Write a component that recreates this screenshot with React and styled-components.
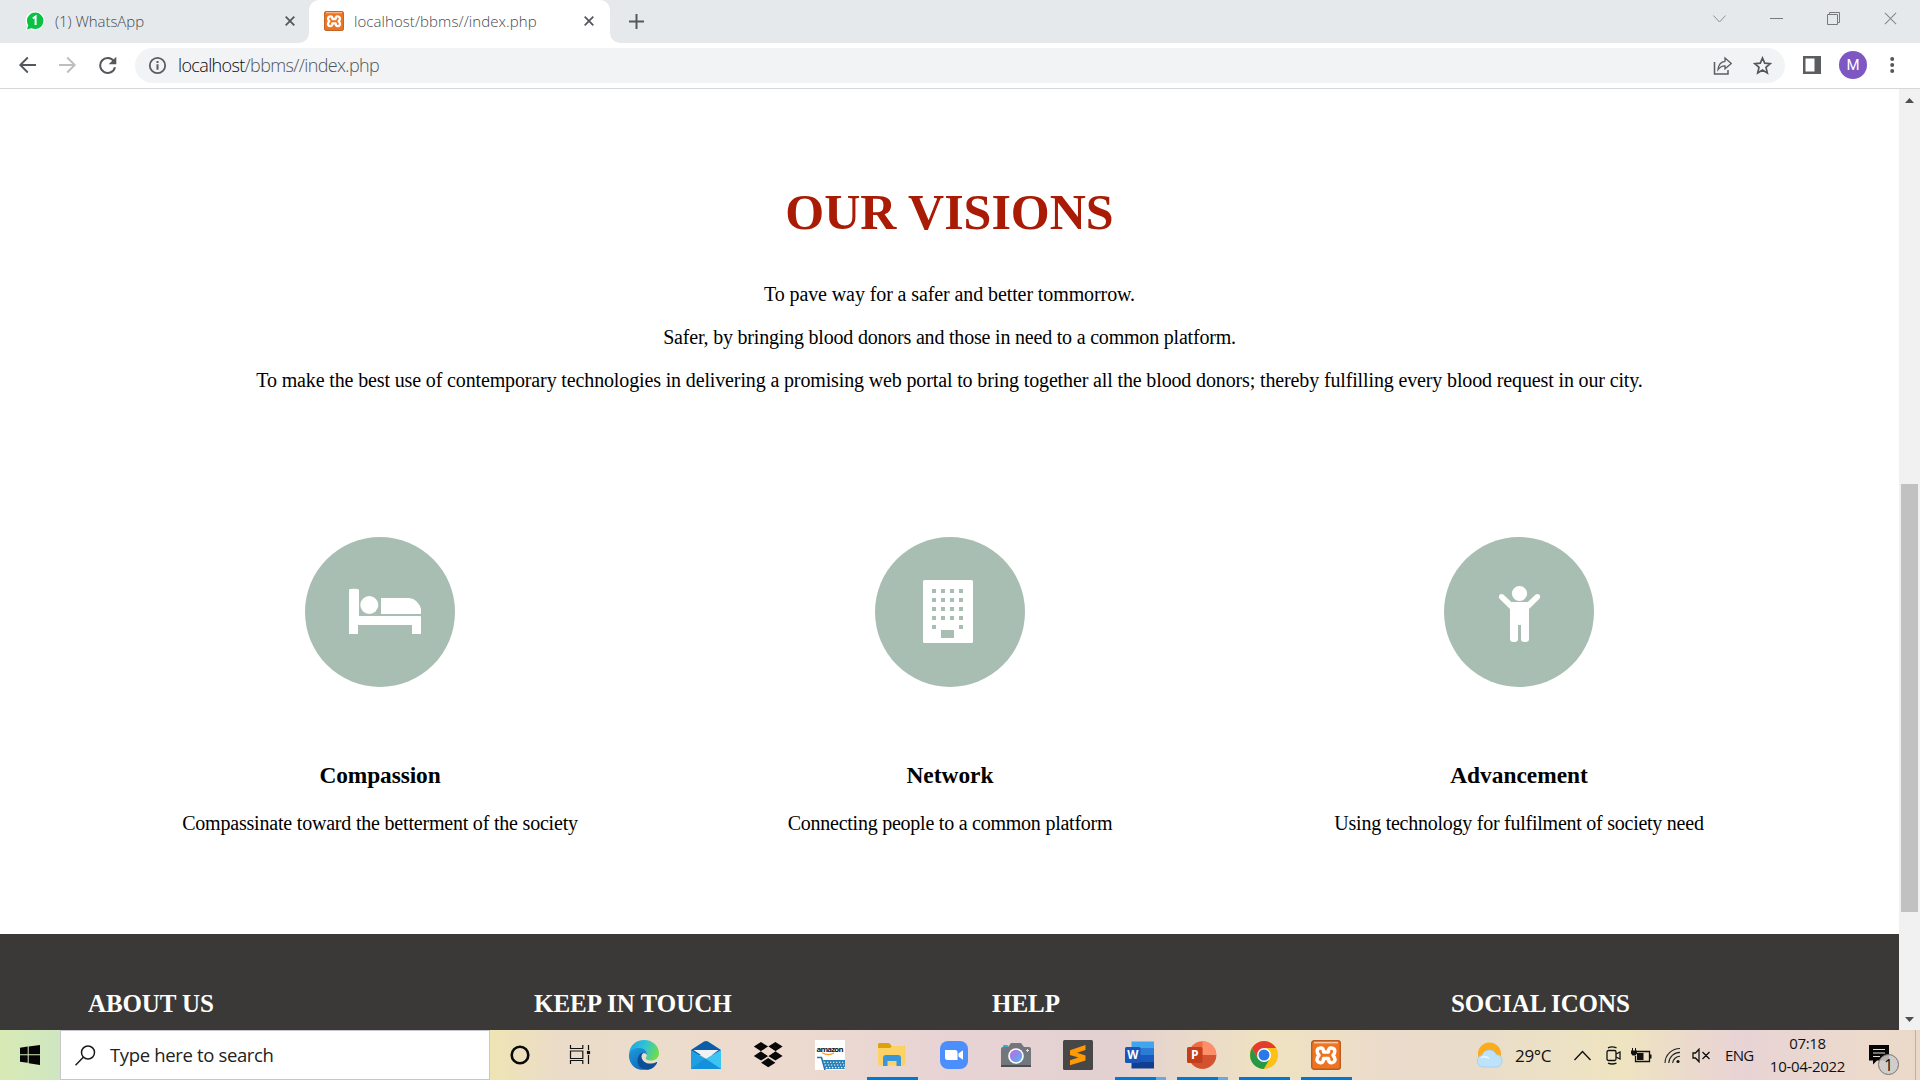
import React from "react";
import styled, { createGlobalStyle } from "styled-components";

const serif = `"Liberation Serif", "Times New Roman", serif`;
const ui = `"Open Sans", "Noto Sans", sans-serif`;

const GlobalStyle = createGlobalStyle`
  * { box-sizing: border-box; }
  html, body { margin: 0; padding: 0; overflow: hidden; }
  svg { display: block; flex: none; }
`;

const Screen = styled.div`
  width: 1920px;
  height: 1080px;
  display: flex;
  flex-direction: column;
  background: #fff;
  overflow: hidden;
`;

/* ---------- browser chrome ---------- */
const TabStrip = styled.div`
  height: 43px;
  flex: none;
  display: flex;
  background: linear-gradient(90deg, #fff 0 700px, #e6e9ec 700px);
  font-family: ${ui};
`;
const Tab = styled.div`
  width: ${(p) => p.$width}px;
  height: 43px;
  display: flex;
  align-items: center;
  padding: 0 ${(p) => p.$right}px 1px ${(p) => p.$left}px;
  background: #fff;
  border-radius: 10px 10px 0 0;
`;
const IdleTab = styled(Tab)`
  background: #e6e9ec;
  border-radius: 0 0 10px 0;
`;
const ActiveTabBacking = styled.div`
  background: linear-gradient(#e6e9ec 12px, #fff 12px);
`;
const TabGap = styled.div`
  flex: 1;
  display: flex;
  align-items: center;
  padding: 0 23px 6px 19px;
  background: #e6e9ec;
  border-bottom-left-radius: 10px;
`;
const NewTab = styled.div`
  padding-top: 5px;
`;
const TabTitle = styled.span`
  flex: 1;
  margin-left: ${(p) => p.$gap}px;
  font-size: 15px;
  font-weight: 300;
  letter-spacing: ${(p) => p.$spacing}px;
  color: #45494e;
  white-space: nowrap;
`;
const WindowControls = styled.div`
  margin-left: auto;
  display: flex;
  align-items: center;
  gap: 44px;
`;
const Toolbar = styled.div`
  height: 46px;
  flex: none;
  display: flex;
  align-items: center;
  padding: 0 0 1px 18px;
  border-bottom: 1px solid #d5d7da;
  background: #fff;
`;
const NavButtons = styled.div`
  display: flex;
  align-items: center;
  gap: 21px;
  width: 117px;
`;
const Omnibox = styled.div`
  width: 1650px;
  height: 35px;
  display: flex;
  align-items: center;
  padding: 0 13px;
  border-radius: 18px;
  background: #f1f3f4;
`;
const Url = styled.span`
  flex: 1;
  margin-left: 11px;
  font-family: ${ui};
  font-size: 18px;
  font-weight: 300;
  letter-spacing: -0.64px;
  color: #505459;
`;
const Host = styled.span`
  color: #08090a;
`;
const OmniActions = styled.div`
  display: flex;
  gap: 21px;
`;
const ToolbarActions = styled.div`
  flex: 1;
  display: flex;
  align-items: center;
  padding-left: 18px;
`;
const Avatar = styled.div`
  width: 28px;
  height: 28px;
  margin: 0 23px 0 18px;
  border-radius: 50%;
  display: grid;
  place-items: center;
  background: #7e57c2;
  color: #fff;
  font: 400 15px/1 Roboto, sans-serif;
`;

/* ---------- web page ---------- */
const Viewport = styled.div`
  height: 941px;
  flex: none;
  display: flex;
`;
const Page = styled.main`
  width: 1899px;
  display: flex;
  flex-direction: column;
  font-family: ${serif};
  color: #000;
`;
const Visions = styled.section`
  height: 845px;
  flex: none;
  padding-top: 95px;
  text-align: center;
`;
const Title = styled.h1`
  margin: 0 0 43px;
  font-size: 50px;
  line-height: 56px;
  color: #a91b05;
`;
const Line = styled.p`
  margin: 0 0 20px;
  font-size: 20px;
  line-height: 23px;
  letter-spacing: ${(p) => p.$spacing}px;
  white-space: nowrap;
`;
const Values = styled.div`
  display: grid;
  grid-template-columns: 570px 570px 568px;
  padding: 125px 95px 0;
`;
const Value = styled.article`
  display: flex;
  flex-direction: column;
  align-items: center;
`;
const Disc = styled.div`
  width: 150px;
  height: 150px;
  border-radius: 50%;
  background: #a9beb2;
`;
const ValueName = styled.h3`
  margin: 75px 0 23px;
  font-size: 23.4px;
  line-height: 27px;
  letter-spacing: ${(p) => p.$spacing}px;
`;
const Footer = styled.footer`
  flex: 1;
  display: grid;
  grid-template-columns: 446px 458px 459px 1fr;
  align-items: start;
  padding: 56px 0 0 88px;
  background: #3b3937;
`;
const FooterHeading = styled.h2`
  margin: 0;
  font-size: 25px;
  line-height: 27px;
  letter-spacing: ${(p) => p.$spacing}px;
  color: #fff;
`;
const Scrollbar = styled.div`
  width: 21px;
  display: flex;
  flex-direction: column;
  align-items: center;
  padding: 9px 0 8px;
  background: #f1f1f1;
`;
const ScrollThumb = styled.div`
  width: 17px;
  height: 428px;
  margin: 381px 0 auto;
  background: #c1c1c1;
`;

/* ---------- taskbar ---------- */
const Taskbar = styled.div`
  height: 50px;
  flex: none;
  display: flex;
  font-family: ${ui};
  color: #111;
  background: linear-gradient(
    90deg,
    #d8eab4 0,
    #cfe6c2 60px,
    #efe4b4 490px,
    #ebdcc9 560px,
    #ecdccd 680px,
    #ecdacf 800px,
    #e8d4d4 930px,
    #e3d0d1 1110px,
    #efe2c1 1270px,
    #ebdbcc 1400px,
    #e9ddca 1480px,
    #efe4c0 1620px,
    #e8d3d5 1740px,
    #ecdacc 1870px,
    #ead9c9 1920px
  );
`;
const StartButton = styled.div`
  width: 60px;
  padding: 15px 0 0 20px;
`;
const SearchBox = styled.div`
  width: 430px;
  height: 50px;
  display: flex;
  align-items: center;
  padding-left: 14px;
  border: 1px solid #c6c6cc;
  background: #fff;
`;
const SearchHint = styled.span`
  margin-left: 14px;
  padding-bottom: 2px;
  font-size: 18.5px;
  letter-spacing: -0.35px;
  color: #222;
`;
const Apps = styled.div`
  display: flex;
  margin-left: -1px;
`;
const AppSlot = styled.div`
  width: 62px;
  height: 50px;
  display: flex;
  flex-direction: column;
  justify-content: space-between;
  padding: 10px 5px 0 6px;
`;
const AppIcon = styled.div`
  padding-left: 10px;
`;
const Running = styled.div`
  height: 3px;
  background: ${(p) =>
    p.$stacked ? "linear-gradient(90deg, #0078d7 41px, #62abe6 41px)" : "#0078d7"};
`;
const Tray = styled.div`
  flex: 1;
  display: flex;
  align-items: center;
  padding-left: 119px;
`;
const TrayItem = styled.div`
  margin-left: ${(p) => p.$gap || 0}px;
`;
const TrayText = styled.div`
  width: ${(p) => p.$width}px;
  margin-left: ${(p) => p.$gap}px;
  font-size: ${(p) => p.$size || 15}px;
  letter-spacing: ${(p) => p.$spacing || 0}px;
  white-space: nowrap;
`;
const Clock = styled.div`
  width: 77px;
  margin-left: 15px;
  text-align: center;
  font-size: 15px;
  line-height: 23px;
  letter-spacing: -0.3px;
  white-space: nowrap;
`;
const Notifications = styled.div`
  position: relative;
  margin-left: 23px;
  width: 30px;
  height: 34px;
  padding-top: 7px;
`;
const Badge = styled.div`
  position: absolute;
  left: 9px;
  top: 16px;
  width: 21px;
  height: 21px;
  border: 1px solid #77736f;
  border-radius: 50%;
  display: grid;
  place-items: center;
  background: rgba(205, 203, 202, 0.88);
  font-size: 16px;
  line-height: 1;
`;
const ShowDesktop = styled.div`
  width: 5px;
  height: 50px;
  margin-left: auto;
  border-left: 1px solid #bfb1a6;
`;

/* ---------- drawings ---------- */
const CloseX = ({ size = 10, color = "#54585d", width = 1.8 }) => (
  <svg width={size} height={size} viewBox="0 0 10 10">
    <path d="M.7.7l8.6 8.6M9.3.7L.7 9.3" stroke={color} strokeWidth={width} />
  </svg>
);

const XamppLogo = ({ size }) => (
  <svg width={size} height={size} viewBox="0 0 30 30">
    <rect x=".7" y=".7" width="28.6" height="28.6" rx="2.5" fill="#ef7421" stroke="#b95c20" strokeWidth="1.4" />
    <path d="M3 2.6h24" stroke="#f9c79f" strokeWidth="1.6" />
    <path
      d="M10 8C6 8 5.600 11 6.600 13.200L8 15.300 6.500 17.500C5 20.500 7 23 9.800 22.700 12.300 22.500 12.600 20 12.600 18.500H17.400C17.400 20 17.700 22.500 20.200 22.700 23 23 25 20.500 23.500 17.500L22 15.300 23.400 13.200C24.400 11 24 8 20 8 17.500 8 17.400 10 17.400 12H12.600C12.600 10 12.500 8 10 8Z"
      fill="none"
      stroke="#fff"
      strokeWidth="3.500"
      strokeLinejoin="round"
    />
  </svg>
);

const WhatsAppBadge = () => (
  <svg width="20" height="20" viewBox="0 0 20 20">
    <circle cx="10" cy="9.800" r="9.500" fill="#fff" />
    <path d="M1 19.500l1.500-6 4 4z" fill="#fff" />
    <circle cx="10.200" cy="9.800" r="8.300" fill="#0bc144" />
    <path d="M2 18.400l1.400-5 3.400 3.700z" fill="#0bc144" />
    <path d="M7.800 7.300l2.800-1.700v8.400" fill="none" stroke="#fff" strokeWidth="2" />
  </svg>
);

const BedIcon = () => (
  <svg width="150" height="150" viewBox="0 0 150 150" fill="#fff">
    <path d="M45 52q4-.6 7.500 0 1.500.2 1.500 1.500V79h61q1 0 1 1v17h-9v-9H53v9h-9V53.500Q44 52 45 52z" />
    <circle cx="64.300" cy="68" r="9" />
    <path d="M76 61h28q9 1 12 11v5H76z" />
  </svg>
);

const BuildingIcon = () => (
  <svg width="150" height="150" viewBox="0 0 150 150">
    <rect x="48" y="43" width="50" height="63" rx="1.500" fill="#fff" />
    <g fill="#a9beb2">
      {[52, 61, 70, 79, 88].map((y, row) =>
        [57, 66, 75, 84].map((x, col) =>
          row === 4 && (col === 1 || col === 2) ? null : (
            <rect key={`${x}-${y}`} x={x} y={y} width="4" height="4" />
          )
        )
      )}
      <rect x="66" y="93" width="13" height="8" />
    </g>
  </svg>
);

const ChildIcon = () => (
  <svg width="150" height="150" viewBox="0 0 150 150" fill="#fff">
    <circle cx="75.500" cy="56.500" r="7.600" />
    <path d="M55.600 57.800q2-1.600 4 0l7.600 7.200h16.600l7.600-7.200q2.200-1.600 4 0 1.600 2 0 4L85 72v30q0 3-3.500 3h-1Q77 105 77 102V88h-3v14q0 3-3.500 3h-1Q66 105 66 102V72L55.600 61.800q-1.600-2 0-4z" />
  </svg>
);

const icons = {
  cortana: (
    <svg width="30" height="30" viewBox="0 0 30 30">
      <circle cx="15" cy="15" r="8.300" fill="none" stroke="#0a0a0a" strokeWidth="2.600" />
    </svg>
  ),
  taskView: (
    <svg width="30" height="30" viewBox="0 0 30 30" fill="none" stroke="#111" strokeWidth="1.200">
      <path d="M3.500 5v3.500h12.300V5M3.500 24v-3.500h12.300V24M3.500 11h12.300v7.500H3.500zM21.500 5v5M21.500 15v9" />
      <rect x="20.500" y="11.500" width="2" height="2" fill="#111" />
    </svg>
  ),
  edge: (
    <svg width="30" height="30" viewBox="0 0 30 30">
      <defs>
        <linearGradient id="edgeTop" x1="0" x2="1" y1=".2" y2=".5">
          <stop offset="0" stopColor="#1fa5dc" />
          <stop offset=".5" stopColor="#2fc2d8" />
          <stop offset="1" stopColor="#6ddc4e" />
        </linearGradient>
        <linearGradient id="edgeSide" x1="0" x2=".6" y1="0" y2="1">
          <stop offset="0" stopColor="#1b9de0" />
          <stop offset="1" stopColor="#1268b8" />
        </linearGradient>
      </defs>
      <path d="M0 14C1 5 7 0 15 0c9 0 15 6.500 15 13 0 5-4 7.500-8 7.500-4 0-6-1.500-5-3 2.500-4 .5-8-5-8.500C7 8.500 3 10 0 14z" fill="url(#edgeTop)" />
      <path d="M0 14c2-4.500 6.500-6.500 10.500-6 5 .5 8 3.500 7.500 7-1-2-4-2.500-5.500 0-3 5 1 12.500 8 13.500C10 33-1 26 0 14z" fill="url(#edgeSide)" />
      <path d="M10 15.500c-4 6 0 14 8 14.300 4 0 8-2.800 10-6.800.4-.8-.2-1.300-1-.8-7 3.500-14 0-14.500-5.500 0-2 .5-3 1.500-4-1.500 0-3 1-4 2.800z" fill="#0c4f96" />
    </svg>
  ),
  mail: (
    <svg width="30" height="30" viewBox="0 0 30 30">
      <path d="M0 10L13 1.500q2-1 4 0L30 10v5H0z" fill="#0c5ca8" />
      <path d="M2.500 10h25L16 19z" fill="#f2f2f2" />
      <path d="M0 10l15 9 15-9v19H0z" fill="#1f9fe4" />
      <path d="M15 19l15-9v19z" fill="#3cc4f2" />
      <path d="M0 29l14-10.500L30 29z" fill="#1591dc" />
    </svg>
  ),
  dropbox: (
    <svg width="30" height="30" viewBox="0 0 30 30" fill="#080808">
      <path d="M8 2l7.200 4.600L8 11.300.8 6.600zM22.400 2l7.200 4.600-7.200 4.700-7.200-4.700zM8 11.300l7.200 4.600L8 20.600.8 15.900zM22.400 11.300l7.200 4.600-7.200 4.700-7.200-4.700zM15.200 18l7.200 4.700-7.200 4.600L8 22.700z" />
      <path d="M8 11.300l7.200-4.700 7.200 4.700-7.200 4.600z" fill="#ecdacf" />
    </svg>
  ),
  amazon: (
    <svg width="30" height="30" viewBox="0 0 30 30">
      <path d="M0 0h30v30H0z" fill="#fff" />
      <text x="1.500" y="11.500" fontFamily="Open Sans" fontWeight="700" fontSize="7.800" textLength="27" fill="#141414">amazon</text>
      <path d="M7 12.700q6 3.600 12 .4" fill="none" stroke="#f79c34" strokeWidth="1.100" />
      <path d="M2 17.500h4.500L10 30" fill="none" stroke="#2378b4" strokeWidth="1.600" />
      <path d="M8 20h22v9H10.500z" fill="#2980b9" />
      <path d="M9 22.300h21M10 25h20M11 27.600h19" stroke="#fff" strokeWidth="1.100" strokeDasharray="1.300 1.700" />
    </svg>
  ),
  explorer: (
    <svg width="30" height="30" viewBox="0 0 30 30">
      <path d="M1 4.500Q1 3 2.500 3h9q1.500 0 2 1.500l1 1.500H28v10H1z" fill="#dfa010" />
      <path d="M1 8h12l2-2h11.500q2 0 2 2v15.500q0 2-2 2H3q-2 0-2-2z" fill="#fdd264" />
      <path d="M6 26V18q0-3 3-3h12q3 0 3 3v8h-4.500v-5h-9v5z" fill="#3a96dc" />
    </svg>
  ),
  zoom: (
    <svg width="30" height="30" viewBox="0 0 30 30">
      <rect x="1" y="1" width="28" height="28" rx="8" fill="#4a8ffc" />
      <path d="M6 10h10q2.500 0 2.500 2.500V20H8.500Q6 20 6 17.500zM19.500 13.500l4-3q.5-.3.500.5v8q0 .8-.5.500l-4-3z" fill="#fff" />
    </svg>
  ),
  camera: (
    <svg width="30" height="30" viewBox="0 0 30 30">
      <defs>
        <linearGradient id="lens" x1="0" x2="1" y1="0" y2="1">
          <stop offset="0" stopColor="#c56be0" />
          <stop offset=".5" stopColor="#8b8cea" />
          <stop offset="1" stopColor="#3cc8ee" />
        </linearGradient>
      </defs>
      <path d="M2 8V6q0-1 1-1h3q1 0 1 1v2z" fill="#36a8e0" />
      <path d="M0 9q0-2 2-2h5l3-4h10l3 4h5q2 0 2 2v17.500H0z" fill="#72777b" />
      <path d="M0 25h30v2H0z" fill="#4c5053" />
      <circle cx="15" cy="16" r="7.800" fill="#fff" />
      <circle cx="15" cy="16" r="6.200" fill="url(#lens)" />
      <path d="M26.500 9v3M25 10.500h3" stroke="#ddd" />
    </svg>
  ),
  sublime: (
    <svg width="30" height="30" viewBox="0 0 30 30">
      <rect width="30" height="30" rx="1.500" fill="#474747" />
      <path d="M7 10.200L22.500 5v5L14 12.800l8.500 2.600v5L7 25.200v-5l8.500-2.700L7 15z" fill="#ff9a05" />
    </svg>
  ),
  word: (
    <svg width="30" height="30" viewBox="0 0 30 30">
      <path d="M6.500 1.500H29V8H6.500z" fill="#41a5ee" />
      <path d="M6.500 8H29v7H6.500z" fill="#2b7cd3" />
      <path d="M6.500 15H29v7H6.500z" fill="#185abd" />
      <path d="M6.500 22H29v6.500H6.500z" fill="#103f91" />
      <rect y="7" width="15.500" height="16" rx="1.500" fill="#1a55b8" />
      <text x="7.700" y="18.800" textAnchor="middle" fontFamily="Open Sans" fontWeight="700" fontSize="11.500" fill="#fff">W</text>
    </svg>
  ),
  powerpoint: (
    <svg width="30" height="30" viewBox="0 0 30 30">
      <circle cx="15.500" cy="15" r="13.800" fill="#ed6c47" />
      <path d="M15.500 1.200A13.800 13.800 0 0 1 29.300 15H15.500z" fill="#ff8f6b" />
      <path d="M1.700 15h27.600a13.800 13.800 0 0 1-27.600 0z" fill="#d35230" />
      <rect y="7" width="15.500" height="16" rx="1.500" fill="#c43e1c" />
      <text x="7.700" y="19" textAnchor="middle" fontFamily="Open Sans" fontWeight="700" fontSize="12" fill="#fff">P</text>
    </svg>
  ),
  chrome: (
    <svg width="30" height="30" viewBox="0 0 30 30">
      <circle cx="15" cy="15" r="14" fill="#fbc117" />
      <path d="M2.900 8A14 14 0 0 1 27.100 8H15L8.900 18.500z" fill="#e33b2e" />
      <path d="M2.900 8l6 10.500L15 22l5-2-5.200 9A14 14 0 0 1 2.900 8z" fill="#279847" />
      <circle cx="15" cy="15" r="7" fill="#fff" />
      <circle cx="15" cy="15" r="5.500" fill="#2a78ea" />
    </svg>
  ),
  xampp: <XamppLogo size={30} />,
};

const apps = [
  { icon: "cortana" },
  { icon: "taskView" },
  { icon: "edge" },
  { icon: "mail" },
  { icon: "dropbox" },
  { icon: "amazon" },
  { icon: "explorer", running: true },
  { icon: "zoom" },
  { icon: "camera" },
  { icon: "sublime" },
  { icon: "word", running: true, stacked: true },
  { icon: "powerpoint", running: true, stacked: true },
  { icon: "chrome", running: true },
  { icon: "xampp", running: true },
];

const visions = [
  { text: "To pave way for a safer and better tommorrow.", spacing: -0.1 },
  { text: "Safer, by bringing blood donors and those in need to a common platform.", spacing: -0.2 },
  {
    text: "To make the best use of contemporary technologies in delivering a promising web portal to bring together all the blood donors; thereby fulfilling every blood request in our city.",
    spacing: -0.137,
  },
];

const values = [
  {
    Icon: BedIcon,
    name: "Compassion",
    nameSpacing: -0.1,
    text: "Compassinate toward the betterment of the society",
    spacing: -0.2,
  },
  {
    Icon: BuildingIcon,
    name: "Network",
    nameSpacing: 0,
    text: "Connecting people to a common platform",
    spacing: -0.24,
  },
  {
    Icon: ChildIcon,
    name: "Advancement",
    nameSpacing: 0,
    text: "Using technology for fulfilment of society need",
    spacing: -0.25,
  },
];

const footerHeadings = [
  { text: "ABOUT US", spacing: -0.1 },
  { text: "KEEP IN TOUCH", spacing: 0 },
  { text: "HELP", spacing: 0 },
  { text: "SOCIAL ICONS", spacing: -0.1 },
];

const BrowserChrome = () => (
  <>
    <TabStrip>
      <IdleTab $width={309} $left={25} $right={14}>
        <WhatsAppBadge />
        <TabTitle $gap={10} $spacing={-0.05}>(1) WhatsApp</TabTitle>
        <CloseX />
      </IdleTab>
      <ActiveTabBacking>
        <Tab $width={301} $left={15} $right={16}>
          <XamppLogo size={20} />
          <TabTitle $gap={10} $spacing={0.07}>localhost/bbms//index.php</TabTitle>
          <CloseX />
        </Tab>
      </ActiveTabBacking>
      <TabGap>
        <NewTab>
          <svg width="15" height="15" viewBox="0 0 15 15">
            <path d="M7.500 0v15M0 7.500h15" stroke="#54585d" strokeWidth="2" />
          </svg>
        </NewTab>
        <WindowControls>
          <svg width="13" height="8" viewBox="0 0 13 8" fill="none" stroke="#8b8e91">
            <path d="M.4.500l6.100 6.500L12.600.5" />
          </svg>
          <svg width="13" height="13" viewBox="0 0 13 13">
            <path d="M0 6.500h13" stroke="#77797c" />
          </svg>
          <svg width="13" height="13" viewBox="0 0 13 13" fill="none" stroke="#77797c">
            <path d="M.5 2.500h10v10H.5zM2.500 2.500V.500h10v10h-2" />
          </svg>
          <CloseX size={13} color="#85888b" width={0.8} />
        </WindowControls>
      </TabGap>
    </TabStrip>
    <Toolbar>
      <NavButtons>
        <svg width="19" height="18" viewBox="0 0 19 18" fill="none" stroke="#54585d" strokeWidth="1.900">
          <path d="M18 9H2.500M9.800 1.500L2.300 9l7.500 7.500" />
        </svg>
        <svg width="19" height="18" viewBox="0 0 19 18" fill="none" stroke="#bcbec1" strokeWidth="1.900">
          <path d="M1 9h15.500M9.200 1.500L16.700 9l-7.500 7.500" />
        </svg>
        <svg width="19" height="18" viewBox="0 0 19 18">
          <path d="M15.800 5A7.500 7.500 0 1 0 17 11.200" fill="none" stroke="#54585d" strokeWidth="2" />
          <path d="M18.300.8v7.400h-7.600z" fill="#54585d" />
        </svg>
      </NavButtons>
      <Omnibox>
        <svg width="19" height="19" viewBox="0 0 19 19">
          <circle cx="9.500" cy="9.500" r="7.700" fill="none" stroke="#5a5e63" strokeWidth="1.800" />
          <path d="M9.500 8.300v5.500M9.500 5v2" stroke="#5a5e63" strokeWidth="2" />
        </svg>
        <Url>
          <Host>localhost</Host>/bbms//index.php
        </Url>
        <OmniActions>
          <svg width="19" height="19" viewBox="0 0 19 19" fill="none" stroke="#5a5e63" strokeWidth="1.500">
            <path d="M1.500 6v12H15v-4" />
            <path d="M12 2l6.300 5.500-6.300 5.300V9.800C9 9.800 7 10.800 5 13.500 5.500 9 8 5.800 12 5.300z" strokeWidth="1.300" />
          </svg>
          <svg width="19" height="19" viewBox="0 0 19 19" fill="none" stroke="#54585d" strokeWidth="1.700">
            <path d="M9.500 2l2.200 5.200 5.600.5-4.300 3.700 1.300 5.500-4.800-2.900-4.800 2.900L6 11.400 1.700 7.700l5.600-.5z" />
          </svg>
        </OmniActions>
      </Omnibox>
      <ToolbarActions>
        <svg width="18" height="18" viewBox="0 0 18 18">
          <path d="M0 0h18v18H0z" fill="#5a5e63" />
          <path d="M2.500 2.500h9v13h-9z" fill="#fff" />
        </svg>
        <Avatar>M</Avatar>
        <svg width="5" height="18" viewBox="0 0 5 18" fill="#54585d">
          <circle cx="2.200" cy="3" r="2" />
          <circle cx="2.200" cy="9" r="2" />
          <circle cx="2.200" cy="15" r="2" />
        </svg>
      </ToolbarActions>
    </Toolbar>
  </>
);

const WindowsTaskbar = () => (
  <Taskbar>
    <StartButton>
      <svg width="20" height="20" viewBox="0 0 20 20" fill="#050505">
        <path d="M0 2.700l7.700-1.100v7.600H0zM8.700 1.400L20 0v9.200H8.700zM0 10.200h7.700v7.600L0 16.800zM8.700 10.200H20V20L8.700 18.200z" />
      </svg>
    </StartButton>
    <SearchBox>
      <svg width="21" height="21" viewBox="0 0 21 21" fill="none" stroke="#1a1a1a" strokeWidth="1.500">
        <circle cx="13" cy="7.500" r="6.500" />
        <path d="M8.300 12.300L.5 20.200" />
      </svg>
      <SearchHint>Type here to search</SearchHint>
    </SearchBox>
    <Apps>
      {apps.map((app) => (
        <AppSlot key={app.icon}>
          <AppIcon>{icons[app.icon]}</AppIcon>
          {app.running && <Running $stacked={app.stacked} />}
        </AppSlot>
      ))}
    </Apps>
    <Tray>
      <TrayItem>
        <svg width="28" height="26" viewBox="0 0 28 26">
          <circle cx="13.500" cy="12" r="11.500" fill="#fbab1c" />
          <path d="M6.800 25A6 6 0 0 1 6 13.200a7.600 7.600 0 0 1 14.200-.6A6.300 6.300 0 0 1 21.200 25z" fill="#bfe2fb" stroke="#9fcdf0" strokeWidth=".8" />
          <path d="M5 16q4-3 8 .5" fill="none" stroke="#e9f6ff" strokeWidth="1.500" />
        </svg>
      </TrayItem>
      <TrayText $gap={11} $width={59} $size={17} $spacing={-0.3}>29°C</TrayText>
      <TrayItem>
        <svg width="18" height="11" viewBox="0 0 18 11" fill="none" stroke="#111" strokeWidth="1.400">
          <path d="M.5 10l8-8.500 8 8.500" />
        </svg>
      </TrayItem>
      <TrayItem $gap={14}>
        <svg width="15" height="19" viewBox="0 0 15 19" fill="none" stroke="#111" strokeWidth="1.300">
          <rect x="1" y="4.500" width="9" height="10" rx="1.500" />
          <path d="M10 8l4-2v7l-4-2M2 1.800Q6 0 10.500 1.800M2 17.200q4 1.600 8.500 0" />
        </svg>
      </TrayItem>
      <TrayItem $gap={10}>
        <svg width="21" height="15" viewBox="0 0 21 15">
          <path d="M4.500 3.500H18.500v10H4.500V8" fill="none" stroke="#111" strokeWidth="1.300" />
          <path d="M19 6.500h1.500v4H19zM6 5h6.500v7H6zM0 2.500h6v3L4.500 7.500h-3L0 5.500zM1 0h1v3H1zM4 0h1v3H4z" fill="#111" />
        </svg>
      </TrayItem>
      <TrayItem $gap={12}>
        <svg width="17" height="17" viewBox="0 0 17 17" fill="none" stroke="#222" strokeWidth="1.100">
          <path d="M1 16A15 15 0 0 1 16 1.500M4.800 16A11.200 11.200 0 0 1 16 5.400M8.600 16A7.500 7.500 0 0 1 16 9.300" />
          <circle cx="14" cy="14.500" r="1.600" fill="#111" stroke="none" />
        </svg>
      </TrayItem>
      <TrayItem $gap={11}>
        <svg width="19" height="15" viewBox="0 0 19 15" fill="none" stroke="#111" strokeWidth="1.300">
          <path d="M1 5h2.500L7 1.200v12.600L3.500 10H1zM10.500 4l7 7M17.500 4l-7 7" />
        </svg>
      </TrayItem>
      <TrayText $gap={14} $width={29} $size={15} $spacing={-0.7}>ENG</TrayText>
      <Clock>
        07:18
        <br />
        10-04-2022
      </Clock>
      <Notifications>
        <svg width="21" height="20" viewBox="0 0 21 20">
          <path d="M0 0h20v15.500H8L4 19.500v-4H0z" fill="#050505" />
          <path d="M4 4.500h12M4 8h12M4 11.500h7" stroke="#e9dace" strokeWidth="1.200" />
        </svg>
        <Badge>1</Badge>
      </Notifications>
      <ShowDesktop />
    </Tray>
  </Taskbar>
);

export default function App() {
  return (
    <Screen>
      <GlobalStyle />
      <BrowserChrome />
      <Viewport>
        <Page>
          <Visions>
            <Title>OUR VISIONS</Title>
            {visions.map((line) => (
              <Line key={line.text} $spacing={line.spacing}>{line.text}</Line>
            ))}
            <Values>
              {values.map(({ Icon, name, nameSpacing, text, spacing }) => (
                <Value key={name}>
                  <Disc>
                    <Icon />
                  </Disc>
                  <ValueName $spacing={nameSpacing}>{name}</ValueName>
                  <Line $spacing={spacing}>{text}</Line>
                </Value>
              ))}
            </Values>
          </Visions>
          <Footer>
            {footerHeadings.map((h) => (
              <FooterHeading key={h.text} $spacing={h.spacing}>{h.text}</FooterHeading>
            ))}
          </Footer>
        </Page>
        <Scrollbar>
          <svg width="9" height="5" viewBox="0 0 9 5">
            <path d="M0 5L4.500 0 9 5z" fill="#505050" />
          </svg>
          <ScrollThumb />
          <svg width="9" height="5" viewBox="0 0 9 5">
            <path d="M0 0h9L4.500 5z" fill="#505050" />
          </svg>
        </Scrollbar>
      </Viewport>
      <WindowsTaskbar />
    </Screen>
  );
}
